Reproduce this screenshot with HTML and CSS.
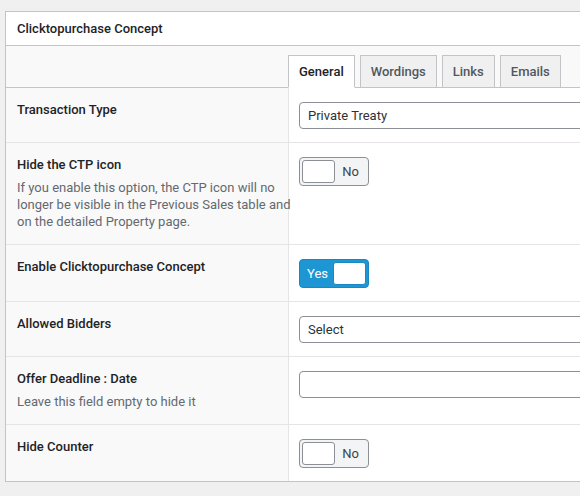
FILE: index.html
```html
<!DOCTYPE html>
<html>
<head>
<meta charset="utf-8">
<link rel="stylesheet" href="styles.css">
</head>
<body>
<div class="panel">
  <div class="panel-head">Clicktopurchase Concept</div>
  <div class="tabs">
    <div class="tab active">General</div>
    <div class="tab">Wordings</div>
    <div class="tab">Links</div>
    <div class="tab">Emails</div>
  </div>
  <div class="row">
    <div class="label-cell"><div class="label">Transaction Type</div></div>
    <div class="field-cell"><div class="input">Private Treaty</div></div>
  </div>
  <div class="row">
    <div class="label-cell">
      <div class="label">Hide the CTP icon</div>
      <div class="desc">If you enable this option, the CTP icon will no longer be visible in the Previous Sales table and on the detailed Property page.</div>
    </div>
    <div class="field-cell"><div class="toggle off"><span class="knob"></span><span class="ttext">No</span></div></div>
  </div>
  <div class="row">
    <div class="label-cell"><div class="label">Enable Clicktopurchase Concept</div></div>
    <div class="field-cell"><div class="toggle on"><span class="ttext">Yes</span><span class="knob"></span></div></div>
  </div>
  <div class="row">
    <div class="label-cell"><div class="label">Allowed Bidders</div></div>
    <div class="field-cell"><div class="input">Select</div></div>
  </div>
  <div class="row">
    <div class="label-cell">
      <div class="label">Offer Deadline : Date</div>
      <div class="desc">Leave this field empty to hide it</div>
    </div>
    <div class="field-cell"><div class="input"></div></div>
  </div>
  <div class="row last">
    <div class="label-cell"><div class="label">Hide Counter</div></div>
    <div class="field-cell"><div class="toggle off"><span class="knob"></span><span class="ttext">No</span></div></div>
  </div>
</div>
</body>
</html>
```
FILE: styles.css
```css
html, body {
  margin: 0;
  padding: 0;
  background: #f0f0f1;
  overflow: hidden;
  width: 580px;
  height: 496px;
}
body {
  font-family: Roboto, "Noto Sans", sans-serif;
  font-size: 13px;
  color: #1d2327;
}
.panel {
  margin: 11px 0 0 5px;
  width: 574px;
  border: 1px solid #c3c4c7;
  border-right: none;
  background: #fff;
  overflow: hidden;
}
.panel-head {
  height: 33px;
  line-height: 33px;
  padding-left: 11px;
  font-weight: 500;
  border-bottom: 1px solid #c3c4c7;
}
.tabs {
  display: flex;
  align-items: flex-end;
  height: 32px;
  padding: 9px 0 0 282px;
  background: #f9f9f9;
  border-bottom: 1px solid #c3c4c7;
}
.tab {
  height: 31px;
  line-height: 31px;
  padding: 0 10px;
  margin-right: 5px;
  margin-bottom: -1px;
  border: 1px solid #c3c4c7;
  background: #f0f0f1;
  color: #50575e;
  font-weight: 500;
}
.tab.active {
  background: #fff;
  border-bottom-color: #fff;
  color: #1d2327;
}
.row {
  display: flex;
  border-bottom: 1px solid #e5e5e5;
}
.row.last {
  border-bottom: none;
}
.label-cell {
  width: 271px;
  flex: none;
  padding: 12px 0 14px 11px;
  background: #f9f9f9;
  border-right: 1px solid #e5e5e5;
}
.label {
  font-weight: 500;
  line-height: 20px;
}
.desc {
  margin-top: 4px;
  line-height: 17px;
  color: #646970;
  width: 279px;
}
.field-cell {
  flex: 1;
  min-width: 0;
  padding: 14px 0 13px 10px;
}
.input {
  box-sizing: border-box;
  width: calc(100% + 20px);
  height: 27px;
  line-height: 25px;
  border: 1px solid #8c8f94;
  border-radius: 4px;
  padding: 0 8px;
  background: #fff;
  color: #2c3338;
}
.toggle {
  box-sizing: border-box;
  display: flex;
  align-items: center;
  width: 70px;
  height: 29px;
  padding: 2px;
  border: 1px solid #8c8f94;
  border-radius: 4px;
}
.toggle.off {
  background: #f3f4f5;
}
.toggle.on {
  background: #1e96d3;
  border-color: #1887c4;
}
.knob {
  box-sizing: border-box;
  width: 33px;
  height: 23px;
  background: #fff;
  border: 1px solid #8c8f94;
  border-radius: 3px;
}
.toggle.on .knob {
  border-color: #1887c4;
}
.ttext {
  flex: 1;
  text-align: center;
  color: #3c434a;
}
.toggle.on .ttext {
  color: #fff;
}
```
